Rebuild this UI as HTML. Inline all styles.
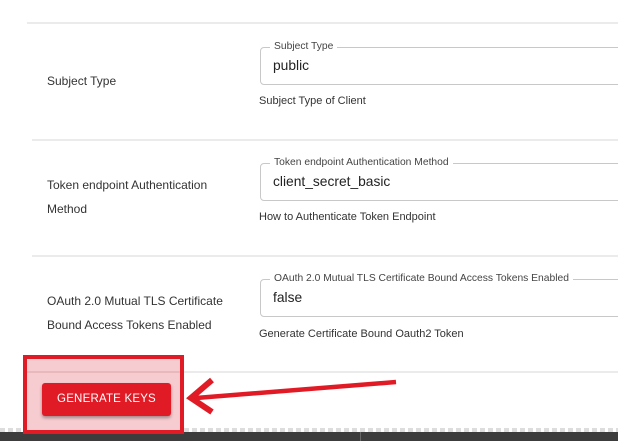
<!DOCTYPE html>
<html><head><style>
html,body{margin:0;padding:0;width:618px;height:441px;overflow:hidden;background:#fff;font-family:"Liberation Sans",Arial,sans-serif;color:#333;position:relative}
.a{position:absolute}
.sep{position:absolute;height:2px;background:#ebebeb;right:0}
.lbl{position:absolute;left:47px;font-size:12px;line-height:24px;color:#333}
.box{position:absolute;left:260px;right:-10px;height:36px;border:1px solid #c8c8c8;border-radius:4px}
.leg{position:absolute;left:9px;top:-8px;background:#fff;padding:0 4px;font-size:10.3px;color:#444;line-height:14px}
.val{position:absolute;left:12px;top:10px;font-size:13.8px;color:#222}
.help{position:absolute;left:259px;font-size:11px;color:#333}
</style></head><body>
<div class="sep" style="left:27px;top:22px"></div>
<div class="sep" style="left:32px;top:139px"></div>
<div class="sep" style="left:32px;top:255px"></div>
<div class="sep" style="left:32px;top:371px"></div>

<div class="lbl" style="top:69px">Subject Type</div>
<div class="box" style="top:47px"><span class="leg">Subject Type</span><span class="val">public</span></div>
<div class="help" style="top:95px">Subject Type of Client</div>

<div class="lbl" style="top:173px">Token endpoint Authentication<br>Method</div>
<div class="box" style="top:163px"><span class="leg">Token endpoint Authentication Method</span><span class="val">client_secret_basic</span></div>
<div class="help" style="top:211px">How to Authenticate Token Endpoint</div>

<div class="lbl" style="top:289px">OAuth 2.0 Mutual TLS Certificate<br>Bound Access Tokens Enabled</div>
<div class="box" style="top:279px"><span class="leg">OAuth 2.0 Mutual TLS Certificate Bound Access Tokens Enabled</span><span class="val">false</span></div>
<div class="help" style="top:328px">Generate Certificate Bound Oauth2 Token</div>

<div class="a" style="left:0;right:0;top:428px;height:4px;background:repeating-linear-gradient(90deg,#ddd 0 5px,#fff 5px 8px)"></div>
<div class="a" style="left:0;right:0;top:432px;height:9px;background:#3c3c3c"></div>
<div class="a" style="left:360px;top:432px;width:1px;height:9px;background:#666"></div>

<div class="a" style="left:23px;top:355px;width:153px;height:71px;border:4px solid #e01b26;background:#f7ccd0"></div>
<div class="a" style="left:27px;top:371px;width:153px;height:2px;background:#e8b8bc"></div>
<div class="a" style="left:42px;top:383px;width:129px;height:33px;background:#e01b26;border-radius:3px;box-shadow:0 2px 3px rgba(0,0,0,.35);color:#fff;font-size:11.5px;text-align:center;line-height:33px;letter-spacing:.2px">GENERATE KEYS</div>

<svg class="a" style="left:0;top:0" width="618" height="441">
<line x1="396" y1="382" x2="196" y2="398" stroke="#e01b26" stroke-width="4.5"/>
<polyline points="212,380 191,398 212,412" fill="none" stroke="#e01b26" stroke-width="6"/>
</svg>
</body></html>
